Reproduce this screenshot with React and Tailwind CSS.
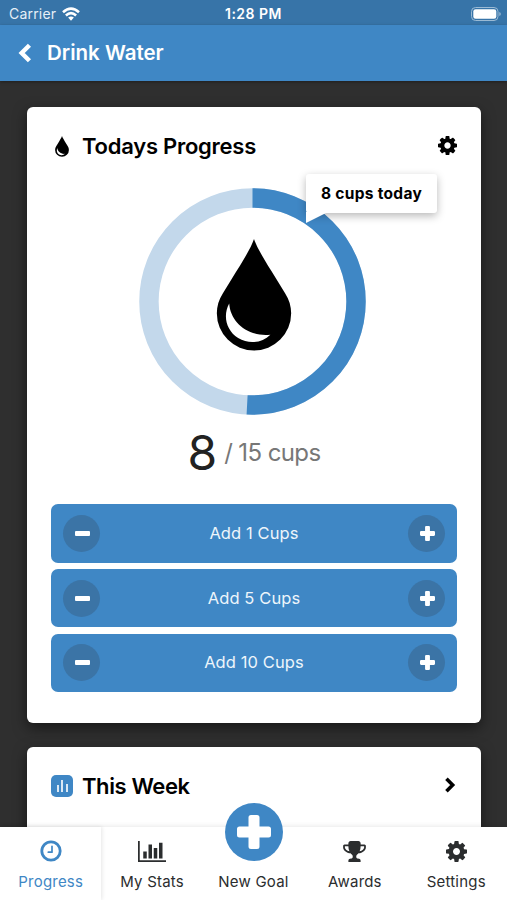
import React from 'react';

function Gear({ className }) {
  return (
    <svg viewBox="0 128 1536 1536" fill="currentColor" className={className}>
      <path d="M1024 896q0-106-75-181t-181-75-181 75-75 181 75 181 181 75 181-75 75-181zm512-109v222q0 12-8 23t-20 13l-185 28q-19 54-39 91 35 50 107 138 10 12 10 25t-9 23q-27 37-99 108t-94 71q-12 0-26-9l-138-108q-44 23-91 38-16 136-29 186-7 28-36 28h-222q-14 0-24.5-8.5t-11.5-21.5l-28-184q-49-16-90-37l-141 107q-10 9-25 9-14 0-25-11-126-114-165-168-7-10-7-23 0-12 8-23 15-21 51-66.5t54-70.5q-27-50-41-99l-183-27q-13-2-21-12.5t-8-23.5v-222q0-12 8-23t19-13l186-28q14-46 39-92-40-57-107-138-10-12-10-24 0-10 9-23 26-36 98.5-107.5t94.5-71.5q13 0 26 10l138 107q44-23 91-38 16-136 29-186 7-28 36-28h222q14 0 24.5 8.5t11.5 21.5l28 184q49 16 90 37l142-107q9-9 24-9 13 0 25 10 129 119 165 170 7 8 7 22 0 12-8 23-15 21-51 66.5t-54 70.5q26 50 41 98l183 28q13 2 21 12.5t8 23.5z" />
    </svg>
  );
}

function Trophy({ className }) {
  return (
    <svg viewBox="64 128 1664 1536" fill="currentColor" className={className}>
      <path d="M522 883q-74-162-74-371h-256v96q0 78 94.5 162t235.5 113zm1078-275v-96h-256q0 209-74 371 141-29 235.5-113t94.5-162zm128-128v128q0 71-41.5 143t-112 130-173 97.5-215.5 44.5q-42 54-95 95-38 34-52.5 72.5t-14.5 89.5q0 54 30.5 91t97.5 37q75 0 133.5 45.5t58.5 114.5v64q0 14-9 23t-23 9h-832q-14 0-23-9t-9-23v-64q0-69 58.5-114.5t133.5-45.5q67 0 97.5-37t30.5-91q0-51-14.5-89.5t-52.5-72.5q-53-41-95-95-113-5-215.5-44.5t-173-97.5-112-130-41.5-143v-128q0-40 28-68t68-28h288v-96q0-66 47-113t113-47h576q66 0 113 47t47 113v96h288q40 0 68 28t28 68z" />
    </svg>
  );
}

function BarChart({ className }) {
  return (
    <svg viewBox="0 128 2048 1536" fill="currentColor" className={className}>
      <path d="M640 896v512h-256v-512h256zm384-512v1024h-256v-1024h256zm1024 1152v128h-2048v-1536h128v1408h1920zm-640-896v768h-256v-768h256zm384-384v1152h-256v-1152h256z" />
    </svg>
  );
}

function Clock({ className }) {
  return (
    <svg viewBox="0 0 22 22" fill="none" stroke="currentColor" className={className}>
      <circle cx="11" cy="11" r="9.2" strokeWidth="2.8" />
      <path d="M12 6.300v5.900H8.300" strokeWidth="1.700" strokeLinejoin="round" strokeLinecap="round" />
    </svg>
  );
}

function Drop({ className }) {
  return (
    <svg viewBox="0 0 76 113" className={className}>
      <path d="M38 0C41 9 49 22 61 41L69.500 55C73.500 61 75.500 68 75.500 75A37.500 37.500 0 0 1 .5 75C.5 68 2.500 61 6.500 55L15 41C27 22 35 9 38 0Z" fill="currentColor" />
      <path d="M13 65C14 83 31 99 54.500 96.500C46 105 33 106.500 22 100C9.500 92 6.500 77 13 65Z" fill="#fff" />
    </svg>
  );
}

function Chevron({ className }) {
  return (
    <svg viewBox="0 0 12 18" fill="none" stroke="currentColor" strokeWidth="4" className={className}>
      <path d="M2 2l7 7-7 7" />
    </svg>
  );
}

function Plus({ className }) {
  return (
    <svg viewBox="0 0 34 34" fill="currentColor" className={className}>
      <path d="M14 0h6q2.500 0 2.500 2.500v9h9q2.500 0 2.500 2.500v6q0 2.500-2.500 2.500h-9v9q0 2.500-2.500 2.500h-6q-2.500 0-2.500-2.500v-9h-9q-2.500 0-2.500-2.500v-6q0-2.500 2.500-2.500h9v-9q0-2.500 2.500-2.500z" />
    </svg>
  );
}

function StatusBar() {
  return (
    <div className="grid h-[25px] grid-cols-3 items-center bg-[#3774a8] pt-[2px] text-[14px] text-white">
      <div className="flex items-center gap-[6px] pl-[9px]">
        <span className="tracking-[0.2px] text-[#e6eff7]">Carrier</span>
        <svg viewBox="0 0 18 14" fill="none" stroke="#fff" strokeWidth="2.600" className="h-[14px] w-[18px]">
          <path d="M1 5.200q8-7.200 16 0M3.900 8.500q5.100-4.600 10.200 0" />
          <path d="M9 13.700l-2.900-3.100q2.900-2.400 5.800 0z" fill="#fff" stroke="none" />
        </svg>
      </div>
      <div className="text-center font-semibold tracking-[0.5px]">1:28 PM</div>
      <div className="flex items-center justify-end pr-[6px]">
        <svg viewBox="0 0 30 14" className="h-[14px] w-[30px]">
          <rect x=".5" y=".5" width="26.500" height="13" rx="4" fill="none" stroke="#9bbad4" />
          <rect x="2.300" y="2.300" width="23" height="9.400" rx="2.300" fill="#fff" />
          <path d="M28.300 5v4q1.500-.6 1.500-2t-1.500-2z" fill="#9bbad4" />
        </svg>
      </div>
    </div>
  );
}

function ProgressRing({ value, goal }) {
  const length = 2 * Math.PI * 104;
  const done = 0.508 * length;

  return (
    <div className="relative ml-[88px] h-[227px] w-[227px]">
      <svg viewBox="0 0 228 228" fill="none" strokeWidth="19.500" className="h-full w-full" aria-label={`${value} of ${goal}`}>
        <circle cx="114" cy="114" r="104" stroke="#c3d8eb" />
        <circle cx="114" cy="114" r="104" stroke="#3f87c5" strokeDasharray={`${done} ${length}`} transform="rotate(-90 114 114)" />
      </svg>
      <Drop className="absolute left-[77px] top-[51px] h-[112px] w-[76px]" />
      <div className="absolute left-[167px] top-[-14px] flex h-[39px] w-[131px] items-center justify-center rounded-[3px] bg-white text-[15.5px] font-bold shadow-[0_3px_8px_rgba(0,0,0,0.28)]">
        <span className="whitespace-nowrap tracking-[0.3px]">{value} cups today</span>
        <svg viewBox="0 0 20 12" className="absolute left-0 top-[38px] h-[12px] w-[20px]">
          <path d="M0 0h20v1L0 11z" fill="#fff" />
        </svg>
      </div>
    </div>
  );
}

function AddRow({ amount }) {
  return (
    <div className="flex h-[58.5px] items-center justify-between rounded-[7px] bg-[#3f87c5] px-[12px] text-white">
      <button className="flex h-[37px] w-[37px] items-center justify-center rounded-full bg-[#3b74a6]">
        <span className="ml-[2px] h-[5px] w-[15px] rounded-[1px] bg-white" />
      </button>
      <span className="text-[16.5px] tracking-[0.1px] text-[#edf5fb]">Add {amount} Cups</span>
      <button className="flex h-[37px] w-[37px] items-center justify-center rounded-full bg-[#3b74a6]">
        <Plus className="ml-[2px] h-[15px] w-[15px]" />
      </button>
    </div>
  );
}

function NavItem({ label, icon, active }) {
  return (
    <div className={`flex h-full w-1/5 flex-col items-center ${active ? 'text-[#3f87c5] shadow-[1px_0_4px_rgba(0,0,0,0.1)]' : 'text-[#2b2d2e]'}`}>
      <div className="flex h-[48px] items-center justify-center">{icon}</div>
      <span className="whitespace-nowrap text-[15px] leading-[14px] tracking-[0.2px]">{label}</span>
    </div>
  );
}

export default function App() {
  return (
    <div className="flex h-[900px] w-[507px] flex-col overflow-hidden bg-[#2f2f2f] font-['Inter','Liberation_Sans',sans-serif] text-black">
      <StatusBar />
      <header className="z-10 flex h-[56px] shrink-0 items-center bg-[#3f87c5] pl-[18px] text-white shadow-[0_1px_3px_rgba(0,0,0,0.35)]">
        <Chevron className="h-[20px] w-[14px] rotate-180" />
        <h1 className="ml-[15px] text-[20.5px] font-semibold">Drink Water</h1>
      </header>

      <main className="min-h-0 flex-1 overflow-hidden pl-[27px] pr-[26px] pt-[26px]">
        <section className="h-[616px] rounded-[6px] bg-white px-[24px] pt-[24px] shadow-[0_5px_14px_rgba(0,0,0,0.5)]">
          <div className="flex h-[30px] items-center">
            <Drop className="ml-[4px] h-[21px] w-[14px]" />
            <h2 className="ml-[13px] flex-1 text-[22px] font-semibold tracking-[-0.25px]">Todays Progress</h2>
            <Gear className="mt-[-2px] h-[19px] w-[19px]" />
          </div>
          <div className="mt-[27px]">
            <ProgressRing value={8} goal={15} />
          </div>
          <div className="mt-[8px] flex h-[60px] items-center justify-center">
            <span className="text-[48px] text-[#222]">8</span>
            <span className="ml-[7px] text-[24px] tracking-[-0.6px] text-[#777]">/ 15 cups</span>
          </div>
          <div className="mt-[21px] flex flex-col gap-[6.3px]">
            <AddRow amount={1} />
            <AddRow amount={5} />
            <AddRow amount={10} />
          </div>
        </section>

        <section className="mt-[24px] h-[200px] rounded-[6px] bg-white px-[24px] pt-[24px] shadow-[0_5px_14px_rgba(0,0,0,0.5)]">
          <div className="flex h-[30px] items-center">
            <div className="flex h-[22px] w-[22px] items-end justify-center gap-[2.5px] rounded-[5px] bg-[#3f87c5] pb-[5px]">
              <span className="h-[7px] w-[2px] bg-[#dbe9f5]" />
              <span className="h-[12px] w-[2px] bg-[#dbe9f5]" />
              <span className="h-[8px] w-[2px] bg-[#dbe9f5]" />
            </div>
            <h2 className="ml-[9px] flex-1 text-[22px] font-semibold tracking-[-0.4px]">This Week</h2>
            <Chevron className="mt-[-2px] mr-[1px] h-[16px] w-[12px]" />
          </div>
        </section>
      </main>

      <nav className="z-10 flex h-[73px] shrink-0 bg-white shadow-[0_-1px_5px_rgba(0,0,0,0.09)]">
        <NavItem active label="Progress" icon={<Clock className="h-[22px] w-[22px]" />} />
        <NavItem label="My Stats" icon={<BarChart className="h-[21px] w-[28px]" />} />
        <NavItem
          label="New Goal"
          icon={
            <div className="-mt-[38px] ml-[1px] flex h-[58px] w-[58px] items-center justify-center rounded-full bg-[#3f87c5] text-white">
              <Plus className="h-[34px] w-[34px]" />
            </div>
          }
        />
        <NavItem label="Awards" icon={<Trophy className="h-[21px] w-[23px]" />} />
        <NavItem label="Settings" icon={<Gear className="h-[21px] w-[21px]" />} />
      </nav>
    </div>
  );
}
